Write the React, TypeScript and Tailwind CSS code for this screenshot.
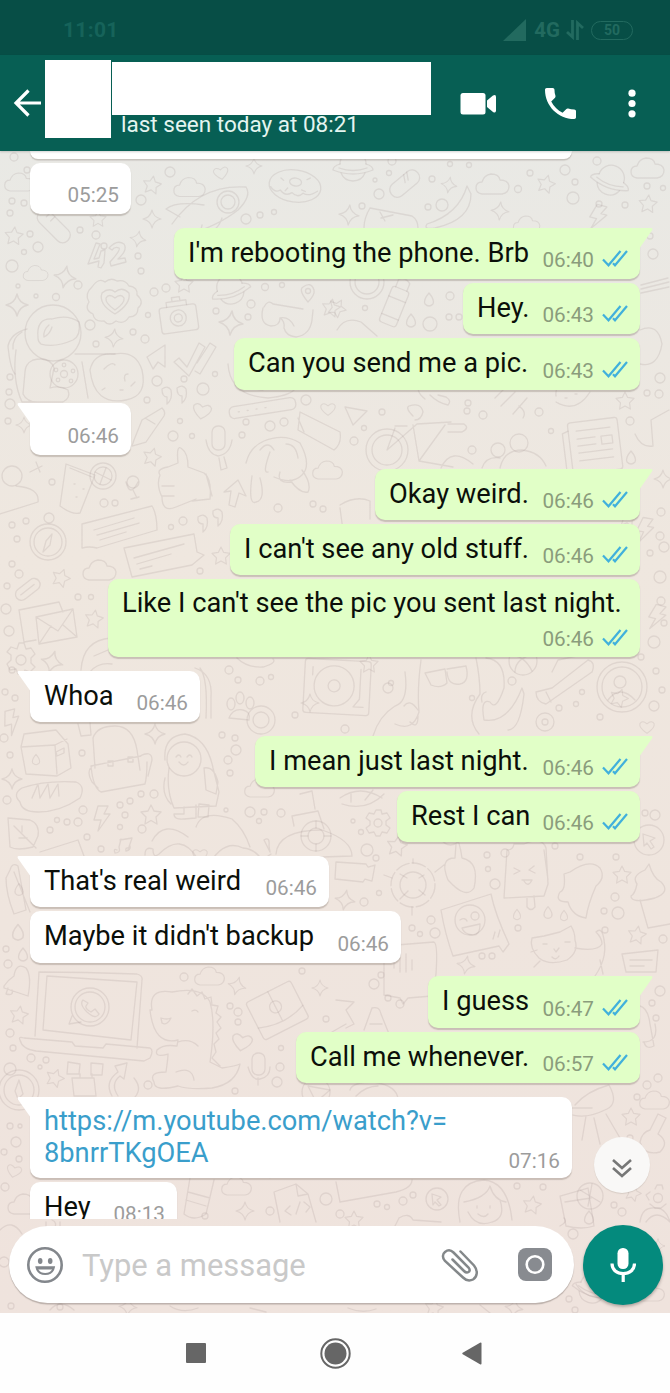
import React from "react";

type Message = {
  id: number;
  mine?: boolean;
  tail?: boolean;
  text?: string;
  time: string;
  size: string;
  link?: boolean;
};

const messages: Message[] = [
  { id: 1, time: "05:25", size: "mt-[3.8px] h-[51.4px] w-[101px]" },
  { id: 2, mine: true, tail: true, text: "I'm rebooting the phone. Brb", time: "06:40", size: "mt-[13.6px] h-[51.4px] w-[466px]" },
  { id: 3, mine: true, text: "Hey.", time: "06:43", size: "mt-[3.8px] h-[51.4px] w-[177px]" },
  { id: 4, mine: true, text: "Can you send me a pic.", time: "06:43", size: "mt-[3.8px] h-[51.4px] w-[406px]" },
  { id: 5, tail: true, time: "06:46", size: "mt-[13.6px] h-[51.4px] w-[101px]" },
  { id: 6, mine: true, tail: true, text: "Okay weird.", time: "06:46", size: "mt-[14px] h-[51.4px] w-[265px]" },
  { id: 7, mine: true, text: "I can't see any old stuff.", time: "06:46", size: "mt-[3.8px] h-[51.4px] w-[410px]" },
  { id: 8, mine: true, text: "Like I can't see the pic you sent last night.", time: "06:46", size: "mt-[3.8px] h-[78.4px] w-[532px]" },
  { id: 9, tail: true, text: "Whoa", time: "06:46", size: "mt-[13.6px] h-[51.4px] w-[170px]" },
  { id: 10, mine: true, tail: true, text: "I mean just last night.", time: "06:46", size: "mt-[13.6px] h-[51.4px] w-[385px]" },
  { id: 11, mine: true, text: "Rest I can", time: "06:46", size: "mt-[3.8px] h-[51.4px] w-[243px]" },
  { id: 12, tail: true, text: "That's real weird", time: "06:46", size: "mt-[13.6px] h-[51.4px] w-[299px]" },
  { id: 13, text: "Maybe it didn't backup", time: "06:46", size: "mt-[3.8px] h-[51.4px] w-[371px]" },
  { id: 14, mine: true, tail: true, text: "I guess", time: "06:47", size: "mt-[13.8px] h-[51.4px] w-[212px]" },
  { id: 15, mine: true, text: "Call me whenever.", time: "06:57", size: "mt-[3.8px] h-[51.4px] w-[344px]" },
  { id: 16, tail: true, link: true, text: "https://m.youtube.com/watch?v=\n8bnrrTKgOEA", time: "07:16", size: "mt-[13.6px] h-[81.5px] w-[542px]" },
  { id: 17, text: "Hey", time: "08:13", size: "mt-[3.8px] h-[51.4px] w-[147px]" },
];

function Ticks() {
  return (
    <svg className="mb-[5px] ml-[8px] h-[17px] w-[26px]" viewBox="0 0 26 17" fill="none" stroke="#41b0dc" strokeWidth="2.2">
      <path d="M1 9.5l5.5 5.8L18.5 1" />
      <path d="M11 13.2l2 2.1L25 1" />
    </svg>
  );
}

function Bubble({ m }: { m: Message }) {
  const side = m.mine ? "self-end bg-[#e1ffc7]" : "self-start bg-white";
  const corner = m.tail ? (m.mine ? "rounded-tr-none" : "rounded-tl-none") : "";
  return (
    <div className={`relative flex shrink-0 rounded-[10px] shadow-[0_1.5px_1px_rgba(120,110,100,0.32)] ${side} ${corner} ${m.size}`}>
      {m.tail && m.mine && (
        <svg className="absolute top-0 left-full -ml-px h-[20px] w-[14px]" viewBox="0 0 14 20" fill="#e1ffc7">
          <path d="M0 0H12Q14.300 .2 13 2.400L1 19.500H0z" />
        </svg>
      )}
      {m.tail && !m.mine && (
        <svg className="absolute top-0 right-full -mr-px h-[20px] w-[14px]" viewBox="0 0 14 20" fill="#fff">
          <path d="M14 0H2Q-.3 .2 1 2.400L13 19.500h1z" />
        </svg>
      )}
      <p className={`grow pl-[14px] text-[27.25px] leading-[32px] whitespace-pre ${m.id === 8 || m.link ? "pt-[8px]" : "pt-[9px]"} ${m.link ? "text-[#3a9ecb]" : "text-[#0b0f0a]"}`}>
        {m.text}
      </p>
      <div className={`absolute flex items-end ${m.link ? "bottom-[5px]" : m.id === 8 ? "bottom-[6px]" : "bottom-[7px]"} ${m.mine ? "right-[12px]" : "right-[12px]"}`}>
        <span className={`text-[20.7px] leading-[24px] ${m.mine ? "text-[#8a9c7c]" : "text-[#9c9c9c]"}`}>{m.time}</span>
        {m.mine && <Ticks />}
      </div>
    </div>
  );
}

/* ---- wallpaper ---- */

const Star = ({ x, y, r = 9, a = 0 }: { x: number; y: number; r?: number; a?: number }) => (
  <path transform={`translate(${x} ${y}) rotate(${a}) scale(${r / 10})`} d="M0-10L3-4L10-3L5 2L6 9L0 5.5L-6 9L-5 2L-10-3L-3-4z" />
);
const Spark = ({ x, y, r = 9, a = 0 }: { x: number; y: number; r?: number; a?: number }) => (
  <path transform={`translate(${x} ${y}) rotate(${a}) scale(${r / 10})`} d="M0-10Q1.5-2 10 0Q2 1.5 0 10Q-1.5 2-10 0Q-2-1.5 0-10z" />
);
const Cloud = ({ x, y, s = 1 }: { x: number; y: number; s?: number }) => (
  <path transform={`translate(${x} ${y}) scale(${s})`} d="M-11 10q-6-1-6-6q0-6 6-6q2-7 9-8q8 0 9 6q8 0 9 6q0 7-7 8z" />
);
const Heart = ({ x, y, s = 1, a = 0 }: { x: number; y: number; s?: number; a?: number }) => (
  <path transform={`translate(${x} ${y}) rotate(${a}) scale(${s})`} d="M0 8Q-10 1-9-4Q-6-9 0-4Q6-9 9-4Q10 1 0 8z" />
);
const Planet = ({ x, y, a = 0 }: { x: number; y: number; a?: number }) => (
  <g transform={`translate(${x} ${y}) rotate(${a})`}>
    <path d="M-13-4a13 13 0 0 1 26 0M-12 5a13 13 0 0 0 24 0" />
    <path d="M-13-4Q-20-2-20 2Q0 10 20 2Q20-2 13-4M-14 0Q0 5 14 0" />
  </g>
);
const Drop = ({ x, y, s = 1 }: { x: number; y: number; s?: number }) => (
  <path transform={`translate(${x} ${y}) scale(${s})`} d="M0-7Q6 0 4 4Q0 8-4 4Q-6 0 0-7z" />
);
const Bolt = ({ x, y, a = 0 }: { x: number; y: number; a?: number }) => (
  <path transform={`translate(${x} ${y}) rotate(${a})`} d="M-4-12H6L2-4H8L-4 13L-1 2H-8z" />
);

const stars: [number, number, number, number][] = [
  [152, 185, 9, 10], [98, 219, 8, 0], [546, 184, 9, 15], [648, 204, 9, 5], [14, 236, 9, 5], [184, 284, 9, 0], [331, 308, 9, 10],
  [337, 308, 9, 30], [152, 457, 9, 15], [625, 401, 9, 0], [61, 578, 9, 20], [94, 619, 9, 10], [221, 556, 9, 0], [628, 518, 9, 10],
  [369, 664, 9, 0], [619, 698, 9, 20], [151, 815, 10, 0], [397, 846, 10, 10], [622, 875, 9, 0], [637, 935, 9, 10], [19, 1015, 9, 10],
  [55, 1078, 9, 20], [631, 1117, 9, 0], [532, 1205, 9, 10], [434, 1308, 9, 10], [633, 1193, 8, 20], [354, 1220, 9, 0],
];
const sparks: [number, number, number, number][] = [
  [254, 166, 8, 0], [152, 219, 9, 0], [449, 185, 8, 10], [349, 215, 10, 5], [500, 211, 9, 5], [65, 277, 11, 10], [17, 305, 11, 0],
  [138, 239, 8, 10], [231, 323, 12, 5], [114, 338, 9, 5], [24, 425, 8, 0], [52, 662, 11, 15], [155, 734, 10, 0],
  [12, 779, 10, 0], [345, 900, 10, 10], [237, 986, 9, 15], [320, 988, 8, 0], [245, 1211, 9, 0], [466, 965, 9, 10], [663, 479, 9, 0],
  [128, 1307, 9, 5], [514, 1308, 9, 10], [658, 1246, 7, 0], [310, 703, 9, 0],
];
const dots: [number, number, number][] = [
  [170, 172, 5], [14, 157, 4], [27, 170, 3], [12, 201, 3], [24, 203, 3], [10, 213, 3], [141, 200, 5], [246, 219, 5], [260, 215, 3], [274, 212, 2.5],
  [392, 161, 4], [450, 164, 2.5], [469, 165, 2.5], [389, 173, 2.5], [375, 180, 2], [432, 179, 3], [518, 189, 3.5], [530, 173, 3], [565, 170, 5],
  [597, 161, 4], [575, 182, 3], [379, 194, 5], [362, 206, 3], [442, 205, 6], [428, 207, 3], [573, 198, 6], [599, 204, 3], [625, 205, 3], [647, 186, 3],
  [663, 188, 2.5], [30, 234, 3], [38, 247, 5], [12, 266, 6], [24, 252, 2.5], [96, 235, 4], [80, 230, 3], [104, 246, 3], [138, 256, 3], [141, 271, 3],
  [78, 285, 4], [56, 297, 3.5], [18, 286, 2], [36, 296, 2], [90, 325, 5], [154, 292, 4], [166, 288, 4], [148, 315, 2.5], [133, 332, 3], [145, 339, 4],
  [96, 344, 3], [251, 304, 4], [216, 311, 3], [248, 317, 3], [265, 287, 3.5], [282, 285, 2.5], [157, 381, 5], [184, 379, 3], [203, 389, 6], [215, 374, 2.5],
  [10, 404, 5], [9, 392, 3], [10, 377, 3], [8, 421, 3], [147, 400, 3], [180, 421, 2.5], [173, 436, 5], [192, 436, 2.5], [242, 435, 3], [246, 422, 3],
  [270, 426, 5], [284, 422, 4], [306, 400, 5], [450, 296, 4], [365, 308, 2.5], [449, 317, 3], [459, 317, 3], [430, 324, 7], [653, 254, 5], [650, 236, 3],
  [382, 412, 3], [468, 403, 3], [483, 415, 4], [467, 411, 3], [539, 412, 4], [551, 431, 2.5], [630, 421, 4], [354, 441, 4], [364, 428, 2.5], [472, 450, 4],
  [647, 393, 3], [659, 394, 4], [660, 378, 5], [12, 525, 3], [26, 521, 3], [17, 539, 3], [12, 564, 3], [19, 574, 4], [7, 586, 3], [6, 609, 5], [9, 631, 5],
  [78, 597, 3], [91, 597, 2.5], [52, 482, 3], [104, 503, 4], [115, 503, 3], [171, 527, 2.5], [183, 521, 4], [278, 508, 4], [313, 504, 3], [323, 509, 3],
  [200, 571, 3], [661, 512, 4], [660, 536, 4], [664, 547, 5], [650, 553, 3], [660, 577, 6], [661, 601, 4], [654, 642, 6], [664, 623, 3], [641, 657, 3],
  [656, 671, 3], [654, 706, 5], [12, 670, 3], [15, 698, 3], [5, 692, 3], [229, 670, 4], [238, 680, 3], [260, 681, 4], [271, 677, 2.5], [295, 715, 3],
  [388, 688, 5], [391, 683, 2.5], [512, 681, 4], [559, 708, 3], [576, 704, 2.5], [582, 692, 2.5], [600, 717, 3], [472, 698, 2.5], [662, 690, 3],
  [4, 738, 4], [10, 755, 3], [82, 753, 3], [7, 800, 4], [50, 830, 3], [83, 810, 4], [78, 822, 4], [67, 822, 3], [57, 820, 2.5], [87, 837, 3], [120, 805, 3],
  [130, 801, 3], [141, 794, 3], [154, 794, 4], [125, 815, 3], [120, 827, 2.5], [142, 829, 4], [101, 849, 3], [222, 735, 3], [235, 738, 3], [236, 750, 5],
  [228, 760, 4], [230, 773, 3], [226, 810, 2], [250, 812, 5], [264, 812, 3], [281, 813, 4], [259, 821, 2.5], [345, 729, 4], [367, 850, 6], [376, 858, 3],
  [361, 832, 2.5], [353, 821, 2], [487, 855, 3], [505, 853, 4], [488, 869, 2.5], [495, 884, 5], [379, 893, 2.5], [364, 902, 4], [431, 920, 4], [412, 928, 3],
  [435, 933, 5], [420, 934, 2.5], [518, 928, 3], [555, 846, 3], [616, 857, 3], [580, 857, 3], [604, 911, 3], [615, 897, 4], [618, 913, 6], [605, 930, 3],
  [482, 956, 3], [492, 956, 3], [645, 813, 3], [655, 815, 5], [663, 939, 4], [6, 949, 3], [8, 964, 4], [184, 977, 4], [10, 1033, 4], [13, 1048, 3],
  [31, 1058, 4], [46, 1060, 3], [40, 1067, 2], [148, 1085, 4], [230, 1006, 3], [238, 1012, 4], [238, 1022, 3], [302, 971, 3], [326, 1019, 3], [280, 1067, 4],
  [281, 1048, 2.5], [277, 1082, 5], [235, 1091, 3], [16, 1142, 5], [10, 1126, 3], [20, 1126, 2], [4, 1152, 3], [19, 1159, 3], [5, 1187, 4], [374, 984, 5],
  [381, 975, 3], [388, 998, 3], [400, 1004, 4], [660, 991, 5], [656, 1018, 3], [652, 1003, 3], [658, 1078, 4], [647, 1085, 4], [637, 1097, 3], [630, 1138, 3],
  [517, 1186, 3], [543, 1187, 3], [403, 1201, 4], [413, 1195, 3], [377, 1204, 3], [387, 1207, 2.5], [340, 1214, 4], [205, 1216, 3], [326, 1199, 6], [270, 1211, 4],
  [614, 1205, 3], [622, 1212, 4], [573, 1234, 5], [11, 1306, 3], [4, 1262, 5], [569, 1299, 3], [575, 1310, 3], [60, 1307, 3],
];
const clouds: [number, number, number][] = [
  [20, 182, 0.9], [190, 187, 0.95], [493, 184, 1], [648, 168, 1], [527, 224, 0.8], [36, 273, 0.75], [100, 570, 1], [328, 470, 0.9], [25, 1204, 1],
  [210, 976, 0.9], [237, 1186, 0.9], [655, 1100, 0.9], [260, 788, 0.9], [650, 1292, 0.9],
];
const hearts: [number, number, number, number][] = [
  [221, 173, 0.8, -10], [202, 411, 1, 10], [115, 302, 1, 0], [242, 1042, 1.1, 10], [14, 1171, 0.8, 15], [647, 727, 0.8, 0], [200, 855, 0.8, 0], [328, 409, 0.8, 0],
];

function Wallpaper() {
  return (
    <svg
      className="absolute inset-0 h-full w-full"
      viewBox="0 151 670 1162"
      fill="none"
      stroke="#8c7f7c"
      strokeOpacity="0.16"
      strokeWidth="1.3"
      strokeLinejoin="round"
      strokeLinecap="round"
      aria-hidden="true"
    >
      {stars.map(([x, y, r, a], i) => <Star key={i} x={x} y={y} r={r} a={a} />)}
      {sparks.map(([x, y, r, a], i) => <Spark key={i} x={x} y={y} r={r} a={a} />)}
      {dots.map(([x, y, r], i) => <circle key={i} cx={x} cy={y} r={r} />)}
      {clouds.map(([x, y, s], i) => <Cloud key={i} x={x} y={y} s={s} />)}
      {hearts.map(([x, y, s, a], i) => <Heart key={i} x={x} y={y} s={s} a={a} />)}
      <Planet x={353} y={168} />
      <Planet x={610} y={182} a={20} />
      <Planet x={231} y={291} a={-18} />
      <Planet x={592} y={1290} a={18} />
      <Drop x={429} y={300} /><Drop x={411} y={321} /><Drop x={631} y={458} /><Drop x={517} y={915} s={0.8} /><Drop x={548} y={913} s={0.9} />
      <Drop x={564} y={916} s={0.8} /><Drop x={18} y={933} s={1.2} /><Drop x={23} y={955} /><Drop x={589} y={1218} /><Drop x={19} y={890} s={0.9} />
      <Bolt x={102} y={818} /><Bolt x={657} y={617} a={15} /><Bolt x={645} y={530} a={10} /><Bolt x={598} y={217} a={15} /><Bolt x={12} y={722} a={-15} />

      {/* donut, rocket, pill, banana */}
      <g transform="rotate(8 295 186)">
        <ellipse cx="295" cy="186" rx="26" ry="16" /><ellipse cx="295" cy="182" rx="6" ry="4" />
        <path d="M271 190q5 6 10 2q6 6 12 1q6 5 11-1q6 3 14-4M280 180l3 2M306 178l3-2M286 192l2-3M302 189l4 1" />
      </g>
      <path d="M172 224q28-40 74-37q6 9-8 23q-20 16-54 26M204 205q-28-4-38 4l14 8M222 218q-5 16-22 16l2-9" />
      <circle cx="228" cy="202" r="11" /><circle cx="228" cy="202" r="7" />
      <g transform="rotate(-40 405 184)"><rect x="388" y="176" width="34" height="15" rx="7" /><path d="M410 176l-4 7M414 176l-4 7" /></g>
      <path d="M467 186q-8 28-40 38q-4 6 8 4q36-8 36-34zM370 208q-6 10-6 20M370 208l42 8q6 4 6 12M380 212l5 9m8-6l-12 3" />
      <g transform="rotate(45 52 228)"><rect x="32" y="218" width="40" height="15" rx="7" /><path d="M40 218v6M46 218v6" /></g>

      {/* 42, badge, camera, glasses, pin */}
      <path d="M96 243l4 1-6 15 5-1 2-7 4-1-1 13-3 5-3-1 1-6-11 3zM109 248q8-9 15-4q4 6-6 15l7-1 1 4-15 4-1-4q11-12 9-14q-4-2-7 2z" />
      <path d="M92 287q7-10 13-5q6-5 12-1q8-2 12 5q9 1 8 9q8 7 1 13q0 9-9 9q-5 8-13 4q-7 6-12 0q-10 1-11-7q-9-4-4-12q-5-8 3-15z" />
      <path d="M115 314Q98 304 102 293Q109 287 115 292Q122 286 129 293Q131 304 115 314z" />
      <g transform="rotate(-8 178 316)"><rect x="160" y="306" width="37" height="26" rx="3" /><path d="M168 306v-5h20v5M174 301h8v-4h-8z" /><circle cx="178" cy="318" r="8" /><circle cx="178" cy="318" r="4" /></g>
      <path d="M264 307q4-8 9-3l30 5M263 308q-4 16 8 18q9 0 9-8q5 3 4 10q2 8 12 9q14-2 16-17l1-10M280 318q9-2 14 8" />
      <path d="M308 302q-10-12-5-15q8-6 11 3q1 5-6 12z" /><circle cx="308" cy="291" r="2.5" />

      {/* astronaut */}
      <circle cx="53" cy="333" r="28" />
      <path d="M38 338q-2-20 14-19q16-5 27 3q2 14-6 18q-18 8-32 4q-3-2-3-6zM49 325q-6 5-5 12q6-3 8-10M27 329q-16 4-19 17q2 22 7 28M22 332q-10 6-9 17" />
      <path d="M16 350q-4 30 6 52h30M33 360q-8 4-8 12l-2 22q4 8 14 8h26q8-4 5-12q-8-5-18-2l4-20q-4-12-21-8M75 354h40M82 362l6 36" />
      <circle cx="64" cy="374" r="14" /><circle cx="64" cy="374" r="3.5" /><circle cx="64" cy="365" r="1.8" /><circle cx="56" cy="370" r="1.8" /><circle cx="58" cy="380" r="1.8" /><circle cx="71" cy="381" r="1.8" /><circle cx="73" cy="371" r="1.8" />
      <path d="M90 370q4-18 24-16q22-4 28 16q6 26-16 30q-32 6-36-30zM104 369q8-8 11-4M125 381q-2-7 3-7M120 390h3M105 388l-3 2M131 386l4-4" />
      <path d="M147 357l18-12v22l-7-5-5 7zM174 362l5-4 8 9 12-24 6 4-16 29zM197 363l13-20 6 4-16 27-5-3" />
      <path d="M167 397q-5 0-5-8q6-4 9 1q2 9-4 14zM182 396q-5 0-5-8q6-4 9 1q2 9-4 14z" />
      <g transform="rotate(-9 263 408)"><rect x="229" y="402" width="67" height="12" rx="5" /><path d="M238 408h1m8 0h1m8 0h1m8 0h1" /></g>
      <path d="M228 364q2 32 40 34q20-2 26-8M235 372q8 18 28 18" />
      <path d="M134 440l8-20 20-12q4 4 2 8l-18 26-14 4zM145 418l10 6" />
      <rect x="212" y="426" width="13" height="24" rx="6" /><path d="M206 440q2 14 12 16q12-2 14-16M219 458l2 12 6-2-3-11" />

      {/* bottle, bicycle, newspaper, keys */}
      <g transform="rotate(22 396 302)"><rect x="387" y="288" width="18" height="38" rx="3" /><path d="M387 299h18M387 318h18M390 288v-8q6-5 12 0v8" /></g>
      <circle cx="367" cy="282" r="17" /><circle cx="367" cy="282" r="12" />
      <path d="M337 330q8-14 24-8l16 14M641 285l27-7M641 289l28-7M641 293l28-6M640 330q18-8 22 14q-4 24-22 20" />
      <circle cx="387" cy="450" r="21" /><circle cx="387" cy="450" r="15" /><path d="M387 450l30-26 34-2M387 450l8-22M395 426h12M413 416q-8-8-4-10q12-4 14 6q-2 8-8 8M413 425l6 36 26-36M419 461l34 6M448 424h16q6 4-2 8h-14M441 468q10-22 32-4" />
      <path d="M425 399q-10-8-5-14M430 395q8 8 18 10q4-4-2-8l-8-2M495 398l12-12M501 406l14-14M513 414l14-16M519 406q8 6 4 12" />
      <circle cx="498" cy="450" r="7" /><circle cx="519" cy="443" r="9" /><path d="M482 468q4-12 18-10M500 468q4-18 22-18q18 2 24 16" />
      <g transform="rotate(-7 595 445)"><rect x="570" y="420" width="50" height="52" rx="3" /><path d="M570 428l-6 2v38M578 429h34M578 437h18M578 444h18M578 451h34M578 459h34M602 437h11v8h-11z" /></g>
      <path d="M635 434q6 14 18 12l-2-26 18-10M300 412l40 20q2 12-6 18l-36-20zM298 418l6 14" />
      <path d="M345 407l22 4-14 14zM556 396q-2-16 24-14M556 402q20 12 34-10M565 398h2m8-4h2" />

      {/* faces, cup, hand, compass, chat signs */}
      <circle cx="12" cy="476" r="10" /><path d="M0 514l38-12q2-14-22-16M36 462l4 10M30 472l12-6" />
      <path d="M66 464l29 11-15 38q-8 2-20-7zM70 468l22 9M74 484h1m8 5h1m-8 8h1" /><circle cx="103" cy="476" r="13" /><circle cx="103" cy="476" r="9" /><path d="M95 472l16 8M106 468l-6 16" />
      <circle cx="133" cy="482" r="6" /><path d="M126 482q4 16 12 0M133 490l4 8M131 499l8-2" />
      <path d="M160 475q-4-6 8-8l10-4q-2-20 4-14q6 4 6 18l16 6q8 6 6 26l-18 2M160 475q-4 10 2 22q0 16 14 10l20-8M162 486h12M162 496h12M206 474l6 22" />
      <path d="M246 463q4-16 18-22q20-8 36 2q12 22 2 32q-10 10-28 2M252 476q-4 30 4 26q10-2 4-24M270 452q-8 22-2 20M280 472q-4 12 12 10M260 450q8-10 14 0M286 444q10 0 12 14M290 480q10 14 18 12q4-8-6-22" />
      <path d="M224 492l14-12 8 16-7-3-4 14-6-2 2-14z" />
      <circle cx="48" cy="542" r="18" /><circle cx="48" cy="542" r="14" /><circle cx="49" cy="518" r="5" /><path d="M52 534l-2 11-7 7 3-11z" />
      <path d="M82 524l70-18q5 8 5 24l-60 18q-8-2-15 0zM94 530l40-12M97 535l42-12M100 540l26-8M124 548l70-14 3 18 7 3-12 10-60 12zM134 558l50-14M137 564l34-10M140 569l12-3" />
      <path d="M203 524q-6 0-5-7q6-4 9 1q2 9-4 14zM218 518q-6 0-5-7q6-4 9 1q2 9-4 14z" />
      <g transform="rotate(-38 27 590)"><rect x="14" y="584" width="28" height="12" rx="6" /><path d="M19 590h17" /></g>
      <path d="M36 640l-12 2-5-32 40-8 4 10M36 617l37-8 4 28-38 7zM36 617l22 14 15-22M39 644l12-18M77 637l-14-12" />
      <circle cx="21" cy="660" r="5" /><path d="M17 649l2-6h5l2 6 5-1 4 6-4 4 0 5 4 4-5 5-5-2-2 4h-5l-2-5-6 1-3-6 4-4v-5l-4-3 4-5z" />
      <path d="M81 670q2-30 30-32M90 672q8-10 22-8M94 656l14-6" />
      <path d="M340 505q16-10 30-4v18M340 508l4 30" />

      {/* record player, paw, glasses, octopus, shoe, user */}
      <g transform="rotate(3 336 688)"><rect x="304" y="660" width="66" height="54" rx="3" /><circle cx="334" cy="686" r="20" /><circle cx="334" cy="686" r="6" /><path d="M312 668v8M360 668v30l-6 8h10" /></g>
      <path d="M237 658q10 10 26 9q14-4 10-8" /><ellipse cx="231" cy="704" rx="4" ry="6" /><ellipse cx="240" cy="698" rx="4" ry="6" /><ellipse cx="250" cy="703" rx="4" ry="6" /><path d="M229 718q4-10 14-8q8 2 6 10z" />
      <circle cx="261" cy="720" r="14" /><circle cx="261" cy="720" r="8" /><path d="M195 668q18 6 16 30v20M200 668q8 10 6 50" />
      <path d="M425 673l20-4 2 14q-6 6-16 2zM447 669l19-3q4 16-6 18q-12 2-13-12" />
      <path d="M421 660q-4 30-2 52q-6 20-24 12M405 672q4 30-10 34q-16 10-22 30M404 706q6-8 14 4M410 722q8 8 8-6M476 658q4 20 4 36q-16 22-1 40M486 658q20 2 18 30q-8 24-14 14q-10-4-6 18q24 4 38-32l2 6q-4 36-16 36M486 692q-6 2-4 10" />
      <circle cx="523" cy="661" r="14" /><path d="M510 655q14 0 22 16M515 672q0-14 20-18" />
      <path d="M536 692l16-4 36-28q8 2 4 12l-46 32q-10-2-10-12zM546 692l5 10M552 672l6-12 28-6" />
      <circle cx="622" cy="687" r="25" /><circle cx="622" cy="687" r="20" /><circle cx="620" cy="682" r="6" /><path d="M608 700q12-16 27 0" />
      <circle cx="545" cy="722" r="9" /><circle cx="545" cy="722" r="3" />

      {/* milk, backpack, bread, leaf, robot */}
      <path d="M24 734l32-4 12 14 3 24-14 8-31-2-5-27zM21 747l34-2 2 29M55 745l12-6M56 752l8-4v5l-7 3z" /><Drop x={36} y={760} s={0.8} />
      <path d="M95 768l-2-30q4-12 22-12q18 0 22 24l3 20M91 766l50-10M91 766q2 22 10 26l44-8q2-8 2-22M108 761v5h5v-5zM128 757v5h5v-5zM92 766q-6 6 0 16l6 6M140 756q12-6 12 4l-4 16M78 724l3 12 10-1-1-12" />
      <path d="M20 802q-8-8 2-14q24-8 54-6q10 4 4 16q-20 14-42 14q-16 0-18-10zM32 798l6-14 2 14 8-14 2 14 8-14 1 12" />
      <path d="M8 818l22 2q10 4 8 16l-5 11q-16 4-23 0zM14 826l22 22M22 832v-6M27 838h-8" />
      <path d="M165 760q-2-24 20-26q22 4 28 34l6 24-3 14-42 2q-8-18-5-40M204 768q10-2 14 14l-2 12-10-4zM165 778q-4 16 6 26M184 807v7h-10q0 6 10 5l12-1v-13M199 804l10 1-1 12h-10z" /><circle cx="184" cy="759" r="17" /><path d="M176 757q3-4 5 0M187 757q3-4 5 0M179 762q5 6 9 0" />
      <path d="M145 863q0-9 8-6q0 10 6 5q22-22 38 4q-6 6 10 10q16-30 36-20q20 2 24 28M152 849q12-22 36-4M196 835q6-18 36-8q12 10 18 28" transform="translate(0 -8)" />
      <path d="M120 840l12-2-4 12M117 850q-4-2-2 3q6 0 4-6l2-8M129 848q-4-1-3 3q5-1 4-5M40 852l38-12 6 16" />
      <path d="M276 854q2-24 46-24q30 10 30 26l-60 2M294 826l-2-10 26-5 6 18M300 794l12-3 3 18M270 852l-6-12q6-4 5 6zM265 858l6-4" /><circle cx="316" cy="836" r="15" /><circle cx="316" cy="836" r="8" /><path d="M316 821v7M316 844v7M301 836h7M324 836h7" />
      <path d="M10 870q2-8 8-4l8 44-12 4q-8-20-8-36zM14 872l16 40" />

      {/* fish, gear, cursor, buoy, cherry, popsicle, ghost, cat */}
      <path d="M340 798q20-14 42 0M342 804q24 8 42-10M351 802v-8M365 800l8-10" />
      <circle cx="378" cy="823" r="4" /><path d="M374 814l2-4h5l1 4 5-1 3 5-4 3v4l4 3-3 5-5-1-2 4h-4l-2-4-5 1-3-5 4-3v-4l-4-3 3-5z" />
      <circle cx="649" cy="840" r="15" /><path d="M643 834l12 4-5 3 4 6-3 2-4-6-3 3z" />
      <circle cx="413" cy="885" r="22" strokeDasharray="14 3" /><circle cx="413" cy="885" r="13" /><path d="M413 863v-4M392 878l-8-3M435 872l9-7M412 907v8M400 899l8-8M425 895l-6-5M424 875l-5 3M400 874l7 4" />
      <path d="M336 862l30 2 2 3 7-2-3 16-7-2-2 3-28-3z" />
      <path d="M456 844l-1 14q-16 0-7 22q18 20 26 8q6-26-12-30q-2-16-8-26M440 838q10 14 22 0" />
      <path d="M507 850q6 0 7-6l10 0q18-8 22 4l2 36-4 12-40 2zM527 897v10q4 5 8 0l-1-11M548 880l-4-30M514 868l6 3-6 3M534 866l-5 4 6 3M522 880h10q-4 8-8 1" />
      <path d="M570 872q20-14 30-4q6 10-4 18q-8 18-10 32q-14-2-18-16q-14 0-8-10q6-2 4-18z" />
      <path d="M637 884q-6-8 8-14l4-6q4 14 12 18q10 10-6 16q-24 6-24-2q4-2 6-12zM640 900l8 28 22-4" />
      <path d="M441 910l50-16q4 20 18 50l-6 8-4-6-46 10q-8-22-12-46z" /><circle cx="470" cy="920" r="15" /><circle cx="475" cy="916" r="4" /><path d="M460 920q5-3 7 1M462 928l18-4q0 12-8 11q-8-1-10-7zM495 932l-2 7M500 930l-2 7" />
      <path d="M532 938l12-2 16-4 11-6q4 6 4 14q4 12-8 20q-18 6-28-2q-10-10-7-20zM543 944h4M565 942h5M554 949l2 3 3-4M552 957q4 4 7-1M537 950l-6 2M540 961l-6 6M575 948q22 4 27-4q0-6-6-12q6-6 8 8q4 20-12 40M600 960l3 14" />
      <path d="M622 954l36-4-2 22h-30zM630 960h22M630 966h14" />
      <path d="M384 946l50-4q4 2 2 32l-4 22-24 2-5 6-3-6-16-3zM394 954v14M400 958v14M406 954v18M412 960v10" />

      {/* bell, laptop, dinosaur, gift, robot, compass */}
      <path d="M4 986q4-6 10-10q2-14 12-8q6 8 2 28l-24-8zM8 988l-2 6q8 2 6-4" />
      <path d="M35 1036l4-64q44 0 98 2q6 2 5 6l-5 68M43 1030l4-54 90 6-6 58zM20 1040q-2-4 4-2l48 4 3 4 28 2 3-4 44 4q4 2 0 10l-6 3-108-10q-14-2-16-11z" />
      <circle cx="90" cy="1007" r="19" /><circle cx="90" cy="1007" r="15" /><path d="M72 1016l-3 8 12-2M83 1000q-4 4 4 12q9 8 12 2l-4-5-4 3q-6-3-5-6l2-3z" />
      <path d="M152 1010q-4-22 20-18q30-6 38 10q6 20 0 60l12 6q14-2 18-4q-4 20-28 24q-22 2-34-2q-24 6-24-4q-6-10 12-10q2-14 2-18q-14 4-11-4q6-6 20-4l1-6q-24 6-28-30zM161 1018q6 2 10 0q-4 8-9 5zM192 1011q4-2 6 1M178 1042q12-4 20 4M176 1072q16-6 18 8M188 994l4-5 5 7 5-4 3 7 6-2 1 8 6 1-2 7 5 4-4 5 4 6-5 5 3 6-5 5 2 8-4 6 8 8" />
      <g transform="rotate(-27 276 1010)"><rect x="252" y="990" width="50" height="42" rx="3" /><path d="M252 1018q26 10 50 0M277 990v32" /><circle cx="277" cy="1007" r="6" /></g>
      <path d="M68 1062l12 2-1 10h-12zM91 1063l12 1-1 11h-11zM72 1078h22l2 18h-22zM80 1074v4M92 1074v4" />
      <path d="M112 1096q-8-14 6-24l-3-6 12-3-3 16-4-3q-10 8-2 20M134 1078q10 12-2 22" />
      <circle cx="19" cy="1090" r="20" /><circle cx="19" cy="1090" r="15" /><circle cx="10" cy="1069" r="6" /><path d="M19 1080l4 14-5 5-3-8z" />
      <rect x="252" y="1053" width="13" height="22" rx="6" /><path d="M248 1067q4 14 12 12q10-2 10-12M258 1078v7" />
      <circle cx="316" cy="1092" r="14" /><path d="M308 1086l22 4-14 12zM350 1090q2-8 24-8q24 4 24 18M356 1096q10-10 22-10" />
      <path d="M336 1000l18 2-8 8 8 14-8 4M346 1024l-14 8M364 1030l8-22q8-2 9 6l8 20M370 1024h12M640 1006q8 2 10 18l4 22q-8 4-10-4M655 1024q4 18-12 18" />
      <path d="M575 1105q12-14 34-20q10 18-2 24q-20 10-34 6M586 1116l-4 24M594 1118l6 26M606 1114l14 24M572 1108h20M610 1082l6-8" />
      <path d="M650 1130l8-16 8 4-8 16q12 8 2 18q-16 4-20-10q2-10 10-12M560 1196l28-8 6 38q-12 4-28 0zM565 1202l26-4" />
      <circle cx="590" cy="1196" r="13" /><path d="M580 1190l20 12M592 1184l-4 22" />
      <circle cx="658" cy="1198" r="4.5" /><path d="M655 1189l2-4h5l1 4M650 1192l-4 3 3 5M650 1204l5 4h6l5-4" />

      {/* lower edge */}
      <path d="M190 1178l-6 36q10 8 22 0l8-34M188 1192l22 6M186 1200l20 6M264 1176q8 4 12-2" />
      <path d="M280 1222l-6-30 22-8 12 10 8 28M296 1184l2 12 10-2M290 1206l-5 5 6 4M304 1202l6 5-4 5M300 1202l-4 12M336 1182l4 20 56-10q16-4 16-12" />
      <circle cx="437" cy="1199" r="11" /><path d="M432 1194l9 3-4 3 4 5-2 1-4-4-2 3z" />
      <path d="M460 1222q-8-40 24-42q24 2 28 40M464 1202q22-4 26-16q4 14 16 16M468 1212q8 16 24 10q14-4 8-22M477 1206v2M490 1206v2M478 1214q6 5 10 0M395 1226l4-8q10-6 14 2l28 2" />
      <path d="M640 1222q2-16 16-14q10 0 14 14M646 1222q10-14 24 0M560 1226q8-4 4-8M50 1310q10-12 24 0M170 1306q12 8 28 2M0 1230q12-12 22 4M46 1222v8M52 1220q6 2 2 10M60 1222v8" />
      <path d="M576 1284q10 18 44 14M480 1305l10 8M348 1308q14 6 28 1M250 1308l16 4" />
    </svg>
  );
}

export default function App() {
  return (
    <div className="flex h-[1393px] w-[670px] flex-col overflow-hidden bg-white font-['Roboto',sans-serif]">
      <div className="flex h-[55px] shrink-0 items-center bg-[#074e46] pt-[5px] pr-[37px] pl-[63px] font-bold text-[#16635a]">
        <span className="grow text-[21px] leading-[24px] tracking-[0.3px]">11:01</span>
        <svg className="mb-[2px] h-[23px] w-[24px]" viewBox="0 0 24 23" fill="#226a5f"><path d="M0 23L23 1V23z" /></svg>
        <span className="ml-[7px] text-[20.5px] leading-[24px] text-[#226a5f]">4G</span>
        <svg className="ml-[6px] h-[20px] w-[18px]" viewBox="0 0 18 20" fill="none" stroke="#226a5f" strokeWidth="2.8">
          <path d="M6.5 0V17L1 12M11.5 20V3L17 8" />
        </svg>
        <span className="ml-[7px] flex h-[19px] w-[42px] items-center justify-center rounded-full border-[1.5px] border-[#226a5f] text-[14px] leading-none text-[#226a5f]">50</span>
      </div>

      <header className="relative z-10 flex h-[96px] shrink-0 items-start bg-[#075f54] shadow-[0_1px_2px_rgba(0,0,0,0.18)]">
        <svg className="mt-[34px] ml-[13px] h-[28px] w-[29px]" viewBox="0 0 29 28" fill="none" stroke="#fff" strokeWidth="3.2">
          <path d="M28 14H3M15.5 1.5L3 14L15.5 26.5" />
        </svg>
        <div className="mt-[5px] ml-[3px] h-[78px] w-[66px] bg-white" />
        <div className="mt-[7px] ml-px w-[319px]">
          <div className="relative z-10 h-[53px] bg-white" />
          <p className="-mt-[5px] pl-[9px] text-[22.5px] leading-[28px] whitespace-nowrap text-[#e4f5f0]">last seen today at 08:21</p>
        </div>
        <svg className="mt-[37px] ml-[29px] h-[23px] w-[37px]" viewBox="0 0 37 23" fill="#fff">
          <rect x="0.5" y="1" width="25" height="21.5" rx="2.5" />
          <path d="M27 8.500L33 3.5Q36 2 36 5V18.500Q36 21.500 33 20L27 15z" />
        </svg>
        <svg className="mt-[33px] ml-[48px] h-[31px] w-[31px]" viewBox="3 3 18 18" fill="#fff">
          <path d="M6.62 10.79c1.44 2.83 3.76 5.14 6.59 6.59l2.2-2.2c.27-.27.67-.36 1.02-.24 1.12.37 2.33.57 3.57.57.55 0 1 .45 1 1V20c0 .55-.45 1-1 1-9.39 0-17-7.61-17-17 0-.55.45-1 1-1h3.5c.55 0 1 .45 1 1 0 1.25.2 2.45.57 3.57.11.35.03.74-.25 1.02l-2.2 2.2z" />
        </svg>
        <svg className="mt-[34px] ml-[52px] h-[29px] w-[8px]" viewBox="0 0 8 29" fill="#fff">
          <circle cx="4" cy="4.200" r="3.600" /><circle cx="4" cy="14.500" r="3.600" /><circle cx="4" cy="24.800" r="3.600" />
        </svg>
      </header>

      <div className="relative flex h-[1162px] shrink-0 flex-col bg-linear-to-b from-[#e9e9e5] via-[#efe7df] via-35% to-[#efe3dd]">
        <Wallpaper />
        <main className="relative flex h-[1068px] shrink-0 flex-col overflow-hidden pr-[30px] pl-[30px]">
          <div className="h-[8px] w-[542px] shrink-0 rounded-b-[10px] bg-white shadow-[0_1.5px_1px_rgba(120,110,100,0.32)]" />
          {messages.map((m) => <Bubble key={m.id} m={m} />)}
        </main>
        <button className="absolute top-[986px] left-[594px] flex h-[56px] w-[56px] items-center justify-center rounded-full bg-[#f9f8f7] shadow-[0_1px_1px_rgba(120,110,100,0.2)]" aria-label="Scroll down">
          <svg className="mt-[5px] h-[20px] w-[20px]" viewBox="0 0 20 20" fill="none" stroke="#777" strokeWidth="2.600">
            <path d="M1 2l9 8 9-8M1 10l9 8 9-8" />
          </svg>
        </button>
        <footer className="relative flex items-center pt-[6px] pl-[9px]">
          <div className="flex h-[77px] w-[565px] items-center rounded-full bg-white pl-[17px] shadow-[0_1.5px_1px_rgba(110,100,95,0.4)]">
            <svg className="h-[38px] w-[38px]" viewBox="0 0 38 38" fill="none" stroke="#83878c" strokeWidth="2.600">
              <circle cx="19" cy="19" r="16.700" />
              <ellipse cx="14.200" cy="15" rx="2.300" ry="2.900" fill="#83878c" stroke="none" />
              <ellipse cx="24.200" cy="15" rx="2.300" ry="2.900" fill="#83878c" stroke="none" />
              <path d="M10.500 21.200H27.900Q26.500 28 19.200 28T10.500 21.200z" strokeWidth="2" />
              <path d="M11.500 21.200H27V23.600H12z" fill="#83878c" stroke="none" />
            </svg>
            <span className="ml-[18px] w-[359px] pt-[2px] text-[30.9px] leading-[36px] text-[#c9c9c9]">Type a message</span>
            <svg className="h-[36px] w-[38px]" viewBox="0 0 38 36" fill="none" stroke="#84888a" strokeWidth="2.500" strokeLinecap="round">
              <path d="M19.500 4.500L33 18.500C37.500 24 36 30 32 32.500C28 34.500 24.500 33 22 30.500L4 14C1 10.500 1.500 7 4 5C7 2.500 10 3 12.500 5.500L27.500 20.500C29.500 23 28.500 24.500 27.500 25C26 26 24.500 25.500 23 24L11.500 12.500" />
            </svg>
            <svg className="ml-[39px] h-[33px] w-[34px]" viewBox="0 0 34 33">
              <rect width="34" height="33" rx="8" fill="#888b90" />
              <circle cx="17" cy="16.500" r="8.300" fill="#888b90" stroke="#fff" strokeWidth="2.600" />
            </svg>
          </div>
          <button className="-mb-px ml-[8.5px] flex h-[80px] w-[80px] shrink-0 items-center justify-center rounded-full bg-[#048a7d] shadow-[0_2px_3px_rgba(90,80,75,0.4)]" aria-label="Record">
            <svg className="h-[36px] w-[26px]" viewBox="0 0 26 36" fill="none" stroke="#fff" strokeWidth="3.200">
              <rect x="7.500" y="1" width="11" height="21" rx="5.200" fill="#fff" stroke="none" />
              <path d="M2 16.500C2 23 7 26.500 13.200 26.500S24.500 23 24.500 16.500M13.200 26.500V35" />
            </svg>
          </button>
        </footer>
      </div>

      <nav className="flex h-[80px] shrink-0 items-center bg-[#fefefe] pl-[186px]">
        <div className="h-[20px] w-[20px] rounded-[1px] bg-[#666]" />
        <svg className="ml-[114px] h-[31px] w-[31px]" viewBox="0 0 31 31">
          <circle cx="15.500" cy="15.500" r="14.200" fill="none" stroke="#666" strokeWidth="2" />
          <circle cx="15.500" cy="15.500" r="11" fill="#666" />
        </svg>
        <svg className="ml-[111px] h-[23px] w-[20px]" viewBox="0 0 20 23" fill="#666"><path d="M.7 10.800Q-.2 11.500.7 12.200L18 22.300Q19.500 23 19.500 21.500V1.500Q19.500 0 18 .7z" /></svg>
      </nav>
    </div>
  );
}
